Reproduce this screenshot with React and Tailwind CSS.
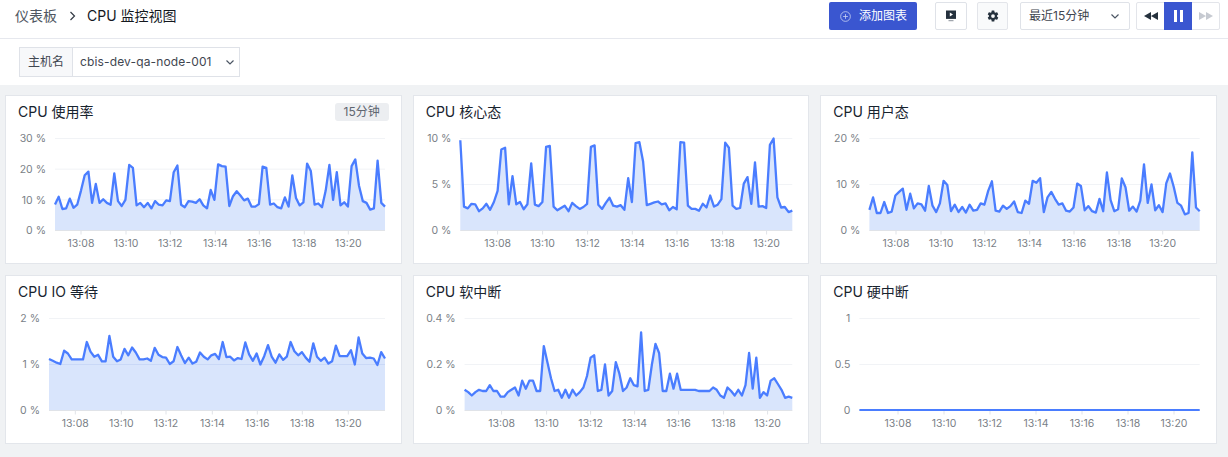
import { IoSettingsSharp } from 'react-icons/io5'

const usage = [8.5, 11, 7, 7.2, 10.4, 7.4, 8.4, 13, 18, 19.2, 9, 15.2, 9, 10.2, 9, 8.4, 18.6, 9.6, 8, 10, 21.4, 20.4, 8.2, 9, 7.6, 9, 7.2, 9.6, 8.4, 8.2, 9.8, 9.6, 19, 21.2, 8.4, 7.6, 9.6, 9.4, 9, 10.2, 8.2, 7.2, 13.2, 10, 21.6, 21, 20.8, 8, 11.2, 12.8, 11.4, 9.8, 10.4, 7.8, 7.8, 8.6, 20.8, 20.4, 8.4, 8.8, 7.6, 7.2, 10.8, 7.8, 18, 10.6, 8.2, 9.2, 21.8, 19.4, 8.4, 8.8, 7.6, 13, 21.4, 10, 19, 8.2, 9.2, 7.8, 21, 23.2, 14.6, 9.6, 9, 6.8, 7.2, 22.8, 9, 7.8]
const kernel = [9.8, 2.6, 2.4, 2.9, 2.85, 2.1, 2.4, 2.9, 2.25, 3.1, 4.3, 8.8, 9.0, 2.85, 5.9, 2.85, 3.1, 2.3, 2.85, 7.3, 2.8, 2.65, 3.1, 9.1, 9.2, 2.6, 2.2, 2.45, 2.7, 2.1, 3.0, 2.65, 2.35, 2.55, 2.9, 9.1, 9.25, 2.8, 2.35, 3.0, 3.55, 2.7, 2.6, 2.75, 2.25, 5.7, 3.1, 9.5, 9.6, 7.5, 2.75, 2.9, 3.05, 3.15, 2.85, 2.95, 2.2, 2.55, 2.3, 9.6, 9.55, 2.7, 2.35, 2.35, 2.15, 2.9, 2.5, 3.8, 2.6, 2.8, 3.4, 9.55, 9.0, 2.7, 2.35, 2.45, 5.1, 5.8, 2.9, 7.4, 2.6, 2.65, 2.45, 9.3, 10, 3.6, 2.5, 2.55, 2.0, 2.15]
const user = [4.5, 7.2, 3.8, 3.8, 6.2, 3.8, 4.1, 7.6, 8.4, 9.1, 4.5, 8, 4.8, 5.9, 5.7, 4.3, 9.7, 5.4, 4.0, 5.9, 10.8, 9.9, 4.2, 5.6, 4.0, 5.1, 3.9, 5.6, 4.3, 4.5, 5.9, 5.6, 8.6, 10.7, 4.3, 4.1, 5.4, 4.7, 5.3, 6.3, 4.0, 3.8, 6.5, 5.8, 10.8, 10.4, 11.4, 4.0, 7.2, 8.4, 6.9, 5.6, 5.9, 4.3, 4.1, 5.0, 10.2, 9.7, 4.4, 5.3, 4.2, 3.9, 6.9, 4.2, 12.6, 6.6, 4.2, 4.6, 11.3, 9.4, 4.3, 5.2, 4.1, 6.5, 14.4, 6.0, 10, 4.4, 5.5, 4.0, 10.3, 12.4, 9.5, 6, 5.4, 3.5, 3.8, 17, 5, 4.2]
const iowait = [1.12, 1.08, 1.04, 1.01, 1.3, 1.24, 1.11, 1.11, 1.11, 1.11, 1.49, 1.28, 1.17, 1.21, 1.07, 1.07, 1.62, 1.17, 1.07, 1.11, 1.34, 1.2, 1.37, 1.26, 1.11, 1.11, 1.13, 1.08, 1.36, 1.21, 1.16, 1.15, 1.01, 1.07, 1.38, 1.2, 1.03, 1.15, 1.02, 1.06, 1.26, 1.17, 1.11, 1.2, 1.23, 1.12, 1.49, 1.16, 1.17, 1.09, 1.14, 1.12, 1.48, 1.22, 1.08, 1.24, 1.0, 1.18, 1.42, 1.17, 1.04, 1.22, 1.1, 1.17, 1.49, 1.29, 1.2, 1.27, 1.15, 1.06, 1.46, 1.17, 1.08, 1.15, 1.02, 1.07, 1.41, 1.18, 1.18, 1.18, 1.31, 1.0, 1.59, 1.24, 1.14, 1.15, 1.13, 0.99, 1.27, 1.13]
const softirq = [0.09, 0.08, 0.065, 0.08, 0.09, 0.085, 0.085, 0.11, 0.085, 0.085, 0.06, 0.06, 0.08, 0.09, 0.1, 0.065, 0.13, 0.095, 0.13, 0.13, 0.085, 0.085, 0.28, 0.21, 0.14, 0.085, 0.09, 0.055, 0.09, 0.055, 0.09, 0.065, 0.08, 0.1, 0.15, 0.23, 0.24, 0.085, 0.09, 0.2, 0.065, 0.085, 0.21, 0.16, 0.085, 0.1, 0.14, 0.11, 0.105, 0.34, 0.085, 0.09, 0.2, 0.29, 0.25, 0.085, 0.085, 0.16, 0.095, 0.16, 0.09, 0.09, 0.09, 0.09, 0.09, 0.085, 0.085, 0.085, 0.085, 0.1, 0.09, 0.065, 0.055, 0.1, 0.085, 0.065, 0.09, 0.065, 0.11, 0.25, 0.095, 0.23, 0.055, 0.08, 0.065, 0.13, 0.14, 0.115, 0.09, 0.055, 0.06, 0.055]

const times = ['13:08', '13:10', '13:12', '13:14', '13:16', '13:18', '13:20']

const charts = [
  { title: 'CPU 使用率', badge: '15分钟', max: 30, labels: ['0 %', '10 %', '20 %', '30 %'], data: usage, x0: 49, x1: 379, ticks: [75, 120, 164.3, 209.3, 253.3, 298.3, 342.3] },
  { title: 'CPU 核心态', max: 10, labels: ['0 %', '5 %', '10 %'], data: kernel, x0: 46.3, x1: 378.3, ticks: [83.6, 128.6, 173.6, 218.3, 263, 308.6, 352.6] },
  { title: 'CPU 用户态', max: 20, labels: ['0 %', '10 %', '20 %'], data: user, x0: 48.4, x1: 378.7, ticks: [75, 120, 163.7, 208.7, 253, 298, 341.7] },
  { title: 'CPU IO 等待', max: 2, labels: ['0 %', '1 %', '2 %'], data: iowait, x0: 43, x1: 379, ticks: [69.3, 115.3, 160, 206.3, 251.3, 296.3, 342.3] },
  { title: 'CPU 软中断', max: 0.4, labels: ['0 %', '0.2 %', '0.4 %'], data: softirq, x0: 50.6, x1: 378.3, ticks: [87.6, 132.6, 176.6, 220.6, 264.6, 309.6, 353.6] },
  { title: 'CPU 硬中断', max: 1, labels: ['0', '0.5', '1'], data: new Array(90).fill(0), flat: true, x0: 38.4, x1: 378.7, ticks: [77, 123, 169, 215, 261, 307, 353] },
]

const TOP = 13.5
const BOTTOM = 105.5

const Chart = ({ title, badge, max, labels, data, x0, x1, ticks, flat }) => {
  const step = (x1 - x0) / (data.length - 1)
  const pts = data.map((v, i) => [x0 + i * step, BOTTOM - (v / max) * (BOTTOM - TOP)])
  const line = pts.map((p) => `${p[0].toFixed(1)},${p[1].toFixed(1)}`).join(' ')
  const area = `${x0},${BOTTOM} ${line} ${x1},${BOTTOM}`

  return (
    <div className="h-[169px] bg-white border border-[#e3e6eb] overflow-hidden">
      <div className="flex items-center justify-between h-[18px] mt-[7px] pl-3 pr-3">
        <h3 className="text-sm font-normal text-[#17232e]">{title}</h3>
        {badge && (
          <span className="h-[18px] w-[54px] flex items-center justify-center rounded-[3px] bg-[#eceef1] text-xs text-[#5f6670]">
            {badge}
          </span>
        )}
      </div>
      <svg className="block mt-[4px] w-full h-[138px] font-['Inter','Liberation_Sans',sans-serif]">
        {labels.map((label, i) => {
          const y = BOTTOM - (i / (labels.length - 1)) * (BOTTOM - TOP)
          return (
            <g key={label}>
              {i > 0 && <line x1={x0} x2={x1} y1={y} y2={y} stroke="#f1f3f6" />}
              <text x={x0 - 9} y={y + 3.8} textAnchor="end" fontSize="10.5" fill="#7a7f87">{label}</text>
            </g>
          )
        })}
        {!flat && <polygon points={area} fill="#d9e5fc" />}
        {!flat && title.includes('IO') && (
          <line x1={x0} x2={x1} y1={59.5} y2={59.5} stroke="#c9d8f7" />
        )}
        <line x1={x0} x2={x1} y1={BOTTOM} y2={BOTTOM} stroke="#e0e3e8" />
        {ticks.map((t, i) => (
          <g key={t}>
            <line x1={t} x2={t} y1={BOTTOM} y2={BOTTOM + 4} stroke="#e0e3e8" />
            <text x={t} y={BOTTOM + 16} textAnchor="middle" fontSize="10.5" fill="#7a7f87">{times[i]}</text>
          </g>
        ))}
        {flat ? (
          <line x1={x0} x2={x1} y1={BOTTOM - 0.5} y2={BOTTOM - 0.5} stroke="#4a7dff" strokeWidth="2" />
        ) : (
          <polyline points={line} fill="none" stroke="#4a7dff" strokeWidth="2.3" strokeLinejoin="round" />
        )}
      </svg>
    </div>
  )
}

const Chevron = () => (
  <svg width="10" height="10" viewBox="0 0 10 10" fill="none" stroke="#4b5563" strokeWidth="1.2">
    <path d="M1.5 3.5 5 7l3.5-3.5" />
  </svg>
)

const App = () => {
  return (
    <div className="w-[1228px] h-[457px] overflow-hidden bg-[#f0f2f4] font-['Inter','Noto_Sans_CJK_SC',sans-serif]">
      <header className="h-[39px] bg-white border-b border-[#e6e8ee] flex items-start justify-between pt-[2px] pl-[15px] pr-[8px]">
        <div className="flex items-center h-[28px] text-sm">
          <span className="text-[#4f5661]">仪表板</span>
          <svg className="ml-[12px] mr-[11px]" width="7" height="10" viewBox="0 0 7 10" fill="none" stroke="#333a44" strokeWidth="1.2">
            <path d="M1.5 1 5.5 5l-4 4" />
          </svg>
          <span className="text-[#14181e]">CPU 监控视图</span>
        </div>
        <div className="flex items-center">
          <button className="w-[88px] h-[28px] rounded-[2px] bg-[#3a56d0] text-white text-xs flex items-center pl-[11px]">
            <svg width="11" height="11" viewBox="0 0 12 12" fill="none" stroke="#c5cff2" strokeWidth="0.9">
              <circle cx="6" cy="6" r="5.3" />
              <path d="M6 3.4v5.2M3.4 6h5.2" />
            </svg>
            <span className="ml-[8px]">添加图表</span>
          </button>
          <button className="ml-[18px] w-[32px] h-[28px] rounded-[2px] bg-white border border-[#dfe2e8] flex items-center justify-center">
            <svg width="12" height="12" viewBox="0 0 12 12">
              <path d="M1 .5h10v8.4H1z" fill="#25313d" />
              <path d="M4.8 2.6v4L8 4.6z" fill="#fff" />
              <path d="M3.5 10.2h5v1h-5z" fill="#8a9099" />
            </svg>
          </button>
          <button className="ml-[10px] w-[31px] h-[28px] rounded-[2px] bg-[#f9fafb] border border-[#e3e5ea] flex items-center justify-center">
            <IoSettingsSharp size={12} color="#25313d" />
          </button>
          <div className="ml-[12px] w-[110px] h-[28px] rounded-[2px] bg-white border border-[#dfe2e8] flex items-center justify-between pl-[8px] pr-[9px] text-xs text-[#3f4650]">
            <span>最近15分钟</span>
            <Chevron />
          </div>
          <div className="ml-[6px] flex h-[28px] w-[84px] rounded-[2px] border border-[#e3e5ea] bg-white">
            <button className="w-[27px] flex items-center justify-center">
              <svg width="14" height="8" viewBox="0 0 14 8" fill="#25313d">
                <path d="M7 0v8L0 4zM14 0v8L7 4z" />
              </svg>
            </button>
            <button className="w-[28px] -my-px bg-[#3a56d0] flex items-center justify-center gap-[3px]">
              <span className="w-[3px] h-[12px] bg-white" />
              <span className="w-[3px] h-[12px] bg-white" />
            </button>
            <button className="flex-1 flex items-center justify-center">
              <svg width="14" height="8" viewBox="0 0 14 8" fill="#c6cad1">
                <path d="M0 0v8l7-4zM7 0v8l7-4z" />
              </svg>
            </button>
          </div>
        </div>
      </header>

      <div className="h-[46px] bg-white pt-[8px] pl-[19px]">
        <div className="flex w-[221px] h-[30px] border border-[#dfe2e8] text-xs">
          <span className="w-[53px] flex items-center justify-center bg-[#f7f8fa] border-r border-[#dfe2e8] text-[#3f4650]">主机名</span>
          <div className="flex-1 flex items-center justify-between pl-[7px] pr-[4px] text-[#3f4650]">
            <span className="tracking-[0.15px]">cbis-dev-qa-node-001</span>
            <Chevron />
          </div>
        </div>
      </div>

      <div className="grid grid-cols-3 gap-[11px] pt-[10px] pl-[5px] pr-[11px]">
        {charts.map((c) => (
          <Chart key={c.title} {...c} />
        ))}
      </div>
    </div>
  )
}

export default App
